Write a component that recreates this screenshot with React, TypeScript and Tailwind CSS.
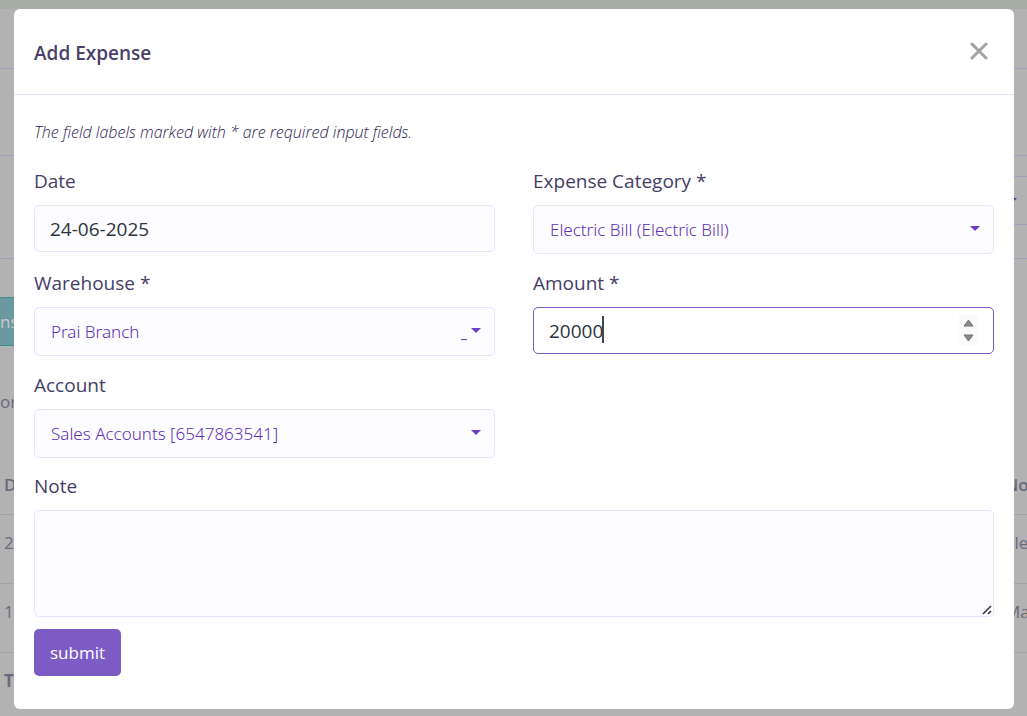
import { useState } from "react";
import type { ReactNode } from "react";

const rows = [
  { date: "24-06-2025", note: "Electric Bill" },
  { date: "12-06-2025", note: "Maintenance" },
];

function Caret({ className }: { className: string }) {
  return (
    <svg viewBox="0 0 10 5" className={className} aria-hidden="true">
      <path d="M0 0h10L5 5z" fill="currentColor" />
    </svg>
  );
}

function Field({ id, label, children }: { id: string; label: string; children: ReactNode }) {
  return (
    <div>
      <label htmlFor={id} className="block text-[19px] leading-6 text-[#463d66]">
        {label}
      </label>
      <div className="relative mt-3">{children}</div>
    </div>
  );
}

function SelectBox({ id, options, mark }: { id: string; options: string[]; mark?: boolean }) {
  return (
    <>
      <select
        id={id}
        className="block h-[49px] w-full appearance-none rounded-[5px] border border-[#e4e6fc] bg-[#fdfdff] px-4 font-['Noto_Sans',sans-serif] text-[17px] font-light text-[#5d2fb8] outline-none"
      >
        {options.map((option) => (
          <option key={option}>{option}</option>
        ))}
      </select>
      {mark && <span className="pointer-events-none absolute right-7 top-8 h-px w-[6px] bg-[#6a3fc4]" />}
      <Caret className="pointer-events-none absolute right-3.5 top-[21px] h-[5px] w-2.5 text-[#6a3fc4]" />
    </>
  );
}

// dimmed expense list behind the dialog
function Backdrop() {
  return (
    <div className="min-h-screen overflow-hidden bg-[#b2b2b2] text-[17px] leading-6 text-[#6c687c]" aria-hidden="true">
      <div className="h-[9px] bg-[#a5ada5]" />
      <div className="h-[60px] border-b border-[#a09ebb]" />
      <div className="h-[87px] border-b border-[#a09ebb]" />
      <div className="flex h-[103px] justify-end border-b border-[#a09ebb] pt-5">
        <div className="flex h-[49px] w-40 items-center justify-end border-y border-[#a09ebb] pr-2.5">
          <Caret className="h-[5px] w-2.5 text-[#4f3590]" />
        </div>
      </div>
      <div className="mt-[38px] flex h-[49px] w-12 items-center border-y border-[#3f8b93] bg-[#6b999f] text-[#c8cccc]">
        nse
      </div>
      <p className="mt-11">or</p>
      <table className="mt-[43px] w-full table-fixed text-left">
        <thead>
          <tr className="h-[57px] border-b border-[#a2a2a6]">
            <th className="pl-1 font-semibold">D</th>
            <th className="w-[22px] overflow-hidden whitespace-nowrap font-semibold">Note</th>
          </tr>
        </thead>
        <tbody>
          {rows.map((row) => (
            <tr key={row.date} className="h-[69px] border-b border-[#a2a2a6] align-top">
              <td className="pl-1 pt-4">{row.date}</td>
              <td className="overflow-hidden whitespace-nowrap pt-4">{row.note}</td>
            </tr>
          ))}
        </tbody>
        <tfoot>
          <tr className="h-[57px]">
            <th className="pl-1 font-bold">Total</th>
            <th />
          </tr>
        </tfoot>
      </table>
    </div>
  );
}

export default function App() {
  const [amount, setAmount] = useState(20000);

  return (
    <div className="relative min-h-screen font-['Open_Sans',sans-serif]">
      <Backdrop />
      <div className="absolute inset-0 pb-[7px] pl-3.5 pr-[13px] pt-[9px]">
        <div role="dialog" aria-labelledby="dialog-title" className="min-h-full rounded-md bg-white">
          <header className="flex items-start justify-between border-b border-[#e4e4f0] pb-[26px] pl-5 pr-[26px] pt-[30px]">
            <h2 id="dialog-title" className="text-[19px] font-semibold leading-[29px] text-[#4a4268]">
              Add Expense
            </h2>
            <button aria-label="Close" className="mt-[3px]">
              <svg viewBox="0 0 18 18" className="h-[18px] w-[18px]">
                <path d="M2 2l14 14M16 2L2 16" stroke="#a3a3a3" strokeWidth="3" strokeLinecap="round" />
              </svg>
            </button>
          </header>
          <form className="px-5 pt-[27px]" onSubmit={(e) => e.preventDefault()}>
            <p className="text-[16px] font-light italic leading-5 text-[#2c2150]">
              The field labels marked with * are required input fields.
            </p>
            <div className="mt-[27px] grid grid-cols-2 gap-x-[38px] gap-y-[17px]">
              <Field id="date" label="Date">
                <input
                  id="date"
                  defaultValue="24-06-2025"
                  className="block h-[47px] w-full rounded-[5px] border border-[#e4e6fc] bg-[#fdfdff] px-[15px] text-[19px] text-[#2c3440] outline-none"
                />
              </Field>
              <Field id="category" label="Expense Category *">
                <SelectBox id="category" options={["Electric Bill (Electric Bill)"]} />
              </Field>
              <Field id="warehouse" label="Warehouse *">
                <SelectBox id="warehouse" options={["Prai Branch"]} mark />
              </Field>
              <Field id="amount" label="Amount *">
                <input
                  id="amount"
                  inputMode="numeric"
                  value={amount}
                  onChange={(e) => setAmount(Number(e.target.value) || 0)}
                  className="block h-[47px] w-full rounded-[5px] border border-[#7c5cc4] bg-white px-[15px] text-[19px] text-[#2c3440] outline-none"
                />
                <span className="pointer-events-none absolute left-[69px] top-[9px] h-[27px] w-0.5 bg-[#3f4650]" />
                <div className="absolute right-4 top-2 flex h-[30px] w-[19px] flex-col bg-[#fafafa]">
                  <button
                    type="button"
                    aria-label="Increase"
                    className="flex flex-1 items-center justify-center"
                    onClick={() => setAmount(amount + 1)}
                  >
                    <svg viewBox="0 0 11 8" className="h-2 w-[11px]">
                      <path d="M5.5 1L10 7H1z" fill="#8b8b8b" stroke="#707070" strokeLinejoin="round" />
                    </svg>
                  </button>
                  <button
                    type="button"
                    aria-label="Decrease"
                    className="flex flex-1 items-center justify-center"
                    onClick={() => setAmount(amount - 1)}
                  >
                    <svg viewBox="0 0 11 8" className="h-2 w-[11px]">
                      <path d="M5.5 7L1 1h9z" fill="#8b8b8b" stroke="#707070" strokeLinejoin="round" />
                    </svg>
                  </button>
                </div>
              </Field>
              <Field id="account" label="Account">
                <SelectBox id="account" options={["Sales Accounts [6547863541]"]} />
              </Field>
            </div>
            <div className="mt-4">
              <Field id="note" label="Note">
                <textarea
                  id="note"
                  className="block h-[107px] w-full resize-none rounded-[5px] border border-[#e4e6fc] bg-[#fdfdff] px-[15px] py-2.5 text-[19px] outline-none"
                />
                <svg viewBox="0 0 10 10" className="pointer-events-none absolute bottom-0.5 right-0.5 h-2.5 w-2.5">
                  <path d="M1 9l8-8M6 9l3-3" stroke="#333" strokeWidth="1.5" />
                </svg>
              </Field>
            </div>
            <button className="mt-3 h-[47px] rounded-[5px] bg-[#7c5cc4] px-4 text-[17px] text-white">submit</button>
          </form>
        </div>
      </div>
    </div>
  );
}
